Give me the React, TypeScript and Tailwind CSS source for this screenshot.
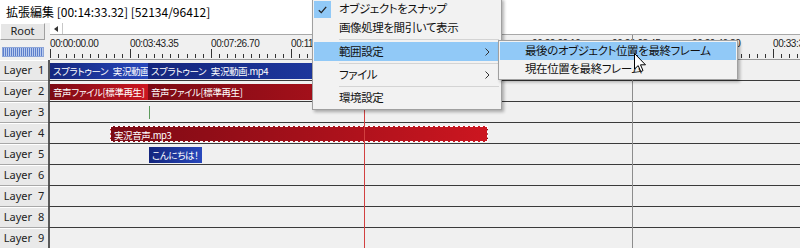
import React from "react";

const jp = "font-['Noto_Sans_CJK_JP',sans-serif] [font-feature-settings:'palt']";

const labels = [
  "00:00:00.00",
  "00:03:43.35",
  "00:07:26.70",
  "00:11:10.05",
  "00:14:53.40",
  "00:18:36.75",
  "00:22:20.10",
  "00:26:03.45",
  "00:29:46.80",
  "00:33:30.15",
];

type Clip = { left: number; width: number; text: string; color: "blue" | "red"; selected?: boolean };

const rows: Clip[][] = [
  [
    { left: 0, width: 98, text: "スプラトゥーン 実況動画.mp4", color: "blue" },
    { left: 98, width: 332, text: "スプラトゥーン 実況動画.mp4", color: "blue" },
  ],
  [
    { left: 0, width: 98, text: "音声ファイル[標準再生]", color: "red" },
    { left: 98, width: 332, text: "音声ファイル[標準再生]", color: "red" },
  ],
  [],
  [{ left: 60, width: 378, text: "実況音声.mp3", color: "red", selected: true }],
  [{ left: 99, width: 53, text: "こんにちは！", color: "blue" }],
  [],
  [],
  [],
  [],
];

function ClipBar({ clip }: { clip: Clip }) {
  return (
    <div
      className={`absolute top-[3px] h-[16px] overflow-hidden whitespace-nowrap pl-[3px] text-[9.5px] leading-[16px] tracking-[-0.4px] text-white [word-spacing:3px] ${jp} ${
        clip.color === "blue"
          ? "bg-gradient-to-r from-[#14267e] to-[#2848bc]"
          : "bg-gradient-to-r from-[#7c0a14] to-[#cc1620]"
      } ${clip.selected ? "border border-dashed border-white leading-[14px]" : ""}`}
      style={{ left: clip.left, width: clip.width }}
    >
      {clip.text}
    </div>
  );
}

function Chevron() {
  return (
    <svg width="5" height="8" viewBox="0 0 5 8" className="absolute right-[8px] top-[6px]">
      <path d="M0.5 0.5 L4 4 L0.5 7.5" fill="none" stroke="#333" strokeWidth="1" />
    </svg>
  );
}

export default function App() {
  return (
    <div className="relative h-[248px] w-[800px] overflow-hidden bg-[#f0f0f0] text-black">
      {/* title */}
      <div className={`flex h-[23px] items-center bg-white pl-[6px] text-[12px] ${jp}`}>
        拡張編集 [00:14:33.32] [52134/96412]
      </div>

      {/* header: root + ruler */}
      <div className="flex h-[37px]">
        <div className="w-[50px] shrink-0 bg-[#f0f0f0]">
          <div className="flex h-[17px] w-[45px] items-center justify-center border border-t-white border-l-white border-r-[#a0a0a0] border-b-[#a0a0a0] bg-[#e6e6e6] font-['Noto_Sans',sans-serif] text-[11px] text-[#222]">
            Root
          </div>
          <div className="ml-[2px] mt-[7px] h-[10px] w-[42px] border border-[#8ea6d8] bg-[repeating-linear-gradient(90deg,#5d7fcc_0px,#5d7fcc_1px,#b9cbee_1px,#b9cbee_2px)]" />
        </div>
        <div className="flex-1">
          <div className="flex h-[12px] border-b border-[#a8a8a8] bg-white">
            <div className="flex w-[13px] items-center justify-center border-r border-[#c8c8c8]">
              <svg width="4" height="6" viewBox="0 0 4 6">
                <path d="M4 0 L0 3 L4 6 Z" fill="#333" />
              </svg>
            </div>
          </div>
          <div className="relative h-[25px] border-b border-[#9a9a9a]">
            {labels.map((l, k) => (
              <span
                key={l}
                className="absolute top-[3px] font-['Liberation_Sans',sans-serif] text-[10px] leading-[12px] tracking-[-0.4px] text-[#222]"
                style={{ left: Math.round(k * 80.3) }}
              >
                {l}
              </span>
            ))}
            <svg width="750" height="25" className="absolute left-0 top-0">
              {Array.from({ length: 94 }).map((_, i) => {
                const x = Math.round(i * 8.03) + 0.5;
                return (
                  <line
                    key={i}
                    x1={x}
                    x2={x}
                    y1={i % 10 === 0 ? 14 : 19}
                    y2={23}
                    stroke="#333"
                    strokeWidth="1"
                  />
                );
              })}
            </svg>
          </div>
        </div>
      </div>

      {/* layers */}
      {rows.map((clips, i) => (
        <div key={i} className="flex h-[21px]">
          <div className="flex w-[48px] shrink-0 items-center justify-center border-b border-t border-b-[#a8a8a8] border-t-white bg-[#e9e9e9] font-['Noto_Sans',sans-serif] text-[11px] text-[#222] [word-spacing:3px]">
            Layer {i + 1}
          </div>
          <div className="relative flex-1 border-b border-l-2 border-b-[#3a3a3a] border-l-[#5a5a5a] bg-[#f0f0f0]">
            {clips.map((c, j) => (
              <ClipBar key={j} clip={c} />
            ))}
            {i === 2 && <div className="absolute left-[99px] top-[4px] h-[13px] w-px bg-[#5c9a5c]" />}
          </div>
        </div>
      ))}

      {/* markers */}
      <div className="absolute bottom-0 left-[632px] top-[35px] w-px bg-[#8c8c8c]" />
      <div className="absolute bottom-0 left-[364px] top-[35px] w-px bg-[#d24040]" />

      {/* context menu */}
      <div className={`absolute left-[312px] top-[-2px] w-[190px] border border-[#a0a0a0] bg-[#f2f2f2] pb-[2px] text-[11.5px] tracking-[-0.4px] text-[#111] shadow-[2px_2px_3px_rgba(0,0,0,0.3)] ${jp}`}>
        <div className="relative flex h-[19px] items-center pl-[26px]">
          <div className="absolute left-[1px] top-[2px] flex h-[17px] w-[17px] items-center justify-center bg-[#91c9f7]">
            <svg width="9" height="8" viewBox="0 0 9 8">
              <path d="M0.8 4.2 L3.3 6.6 L8.2 0.8" fill="none" stroke="#222" strokeWidth="1.3" />
            </svg>
          </div>
          オブジェクトをスナップ
        </div>
        <div className="flex h-[19px] items-center pl-[26px]">画像処理を間引いて表示</div>
        <div className="flex h-[5px] items-center pl-[26px] pr-[2px]">
          <div className="h-px w-full bg-[#d4d4d4]" />
        </div>
        <div className="relative ml-[1px] mr-[3px] flex h-[19px] items-center bg-[#91c9f7] pl-[25px]">
          範囲設定
          <Chevron />
        </div>
        <div className="flex h-[4px] items-center pl-[26px] pr-[2px]">
          <div className="h-px w-full bg-[#d4d4d4]" />
        </div>
        <div className="relative mr-[3px] flex h-[19px] items-center pl-[26px]">
          ファイル
          <Chevron />
        </div>
        <div className="flex h-[4px] items-center pl-[26px] pr-[2px]">
          <div className="h-px w-full bg-[#d4d4d4]" />
        </div>
        <div className="flex h-[19px] items-center pl-[26px]">環境設定</div>
      </div>

      {/* submenu */}
      <div className={`absolute left-[498px] top-[40px] w-[240px] border border-[#a0a0a0] bg-[#f2f2f2] py-[1px] text-[11.5px] tracking-[-0.4px] text-[#111] shadow-[2px_2px_3px_rgba(0,0,0,0.3)] ${jp}`}>
        <div className="mx-[1px] flex h-[18px] items-center bg-[#91c9f7] pl-[25px]">最後のオブジェクト位置を最終フレーム</div>
        <div className="flex h-[18px] items-center pl-[26px]">現在位置を最終フレーム</div>
      </div>

      {/* cursor */}
      <svg width="13" height="20" viewBox="0 0 13 20" className="absolute left-[634px] top-[53px]">
        <path
          d="M0.5 0.5 L0.5 16 L4.2 12.6 L6.8 18.6 L9 17.6 L6.5 11.8 L11.5 11.8 Z"
          fill="white"
          stroke="black"
          strokeWidth="1"
          strokeLinejoin="miter"
        />
      </svg>
    </div>
  );
}
